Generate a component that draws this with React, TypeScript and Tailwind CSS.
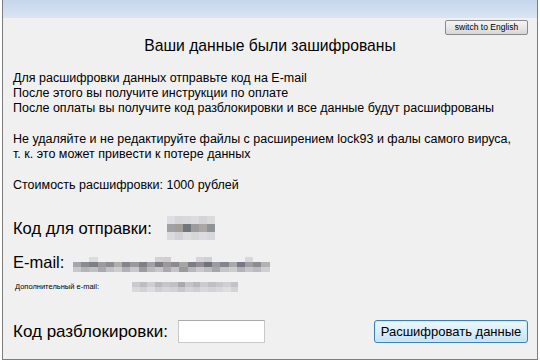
import React from "react";

type Row = string[];

function Mosaic({ rows, cw, ch }: { rows: Row[]; cw: number; ch: number }) {
  return (
    <div className="flex flex-col">
      {rows.map((r, i) => (
        <div key={i} className="flex">
          {r.map((c, j) => (
            <div key={j} style={{ width: cw, height: ch, background: c }} />
          ))}
        </div>
      ))}
    </div>
  );
}

const B = "transparent";

const codeRows: Row[] = [
  ["#dedee2", "#d6d6da", "#d8d8dc", "#dcdcdf", "#d4d4d8", "#dadadd"],
  ["#9fa1a5", "#a39d98", "#70767e", "#9c9b9d", "#aaa6a6", "#8f9296"],
  ["#dadadd", "#d2d2d6", "#dddde0", "#d6d6d9", "#dcdce0", "#d8d8dc"],
];

const emailRows: Row[] = [
  [B, B, "#dcdcdf", B, B, B, B, B, B, B, "#d2d2d6", "#cfcfd3", B, B, B, "#d6d6d9", "#d0d0d4", B, B, B, B, "#d8d8dc", B, B],
  ["#a6a6aa", "#8a8b90", "#7d7f86", "#9a9aa0", "#8d8c91", "#b0adab", "#85868c", "#9c999c", "#7f8189", "#a0a0a6", "#7c7c82", "#9b979b", "#8a8a90", "#a8a4a2", "#7a7d84", "#908e94", "#6f737c", "#9a9aa0", "#83858c", "#a9a8ab", "#77798a", "#9e9ea3", "#8c8c92", "#b2b2b6"],
  ["#c8c8cc", "#b4b4b8", "#bfbfc3", "#a8a8ae", "#c2c2c6", "#cdcdd0", "#b0b0b6", "#c8c8cc", "#9c9ba0", "#b8b8bd", "#c6c6ca", "#a9a9ae", "#c4c4c8", "#9a999e", "#b8b8bc", "#c9c9cd", "#bcbcc0", "#a6a6ab", "#c5c5c9", "#cdcdd1", "#b2b2b7", "#c6c6ca", "#bcbcc0", "#cfcfd2"],
];

const addRows: Row[] = [
  ["#c9c9ce", "#bdbdc3", "#cfcfd3", "#b9b9bf", "#c6c6ca", "#c0c0c5", "#a9aab0", "#c4c4c9", "#b8b8be", "#cbcbcf", "#bfbfc4", "#c8c8cc", "#d0d0d4", "#c2c2c8"],
  ["#d9d9dc", "#d2d2d6", "#dcdcdf", "#cfcfd3", "#d6d6d9", "#d2d2d6", "#c8c8cc", "#d4d4d8", "#cfcfd3", "#d9d9dc", "#d3d3d7", "#d8d8db", "#dedee1", "#d4d4d8"],
];

export default function App() {
  return (
    <div
      className="w-[540px] h-[361px] bg-white overflow-hidden"
      style={{ fontFamily: '"Liberation Sans", Arial, sans-serif' }}
    >
      <div className="ml-[2px] w-[536px] h-[360px] border-x border-b border-[#7d7d7d] bg-[#f0f0f0] flex flex-col text-black">
        <div className="h-[18px] shrink-0 bg-gradient-to-b from-[#c5d6ec] to-[#dae5f3]" />
        <div className="flex flex-col pl-[10px]">
          <div className="flex justify-end pr-[9px] mt-[2px]">
            <button className="w-[83px] h-[15px] rounded-[2px] border border-[#8a8a8a] bg-gradient-to-b from-[#f4f4f4] via-[#e8e8e8] to-[#d6d6d6] text-[8.5px] leading-[13px] text-black">
              switch to English
            </button>
          </div>
          <div className="mt-[1px] h-[20px] text-center text-[15.7px] leading-[20px] pr-[10px]">
            Ваши данные были зашифрованы
          </div>
          <div className="mt-[15px] text-[12.5px] leading-[15px]">
            <div>Для расшифровки данных отправьте код на E-mail</div>
            <div>После этого вы получите инструкции по оплате</div>
            <div>После оплаты вы получите код разблокировки и все данные будут расшифрованы</div>
          </div>
          <div className="mt-[16px] text-[12.5px] leading-[15px]">
            <div>Не удаляйте и не редактируйте файлы с расширением lock93 и фалы самого вируса,</div>
            <div>т. к. это может привести к потере данных</div>
          </div>
          <div className="mt-[16px] text-[12.5px] leading-[15px]">Стоимость расшифровки: 1000 рублей</div>
          <div className="mt-[23px] h-[24px] flex items-center">
            <span className="text-[16.5px] leading-[24px] w-[154px]">Код для отправки:</span>
            <Mosaic rows={codeRows} cw={8} ch={8} />
          </div>
          <div className="mt-[12px] h-[21px] flex items-center">
            <span className="text-[16.5px] leading-[21px] w-[60px]">E-mail:</span>
            <div className="mt-[4px]">
              <Mosaic rows={emailRows} cw={8.2} ch={5} />
            </div>
          </div>
          <div className="mt-[8px] h-[12px] flex items-center">
            <span className="text-[7.5px] leading-[12px] w-[119px] pl-[2px]">Дополнительный e-mail:</span>
            <Mosaic rows={addRows} cw={7.6} ch={5} />
          </div>
          <div className="mt-[27px] h-[23px] flex items-center pr-[9px]">
            <span className="text-[17px] leading-[23px] w-[165px]">Код разблокировки:</span>
            <div className="w-[87px] h-[23px] bg-white border border-[#c8c8c8] border-t-[#acacac]" />
            <div className="flex-1" />
            <button className="w-[154px] h-[23px] rounded-[3px] border border-[#3c7fb1] bg-gradient-to-b from-[#eaf6fd] via-[#dbeef9] to-[#c4e3f5] shadow-[inset_0_0_0_1px_#c9ecfb] text-[13px] leading-[20px] text-black">
              Расшифровать данные
            </button>
          </div>
        </div>
      </div>
    </div>
  );
}
